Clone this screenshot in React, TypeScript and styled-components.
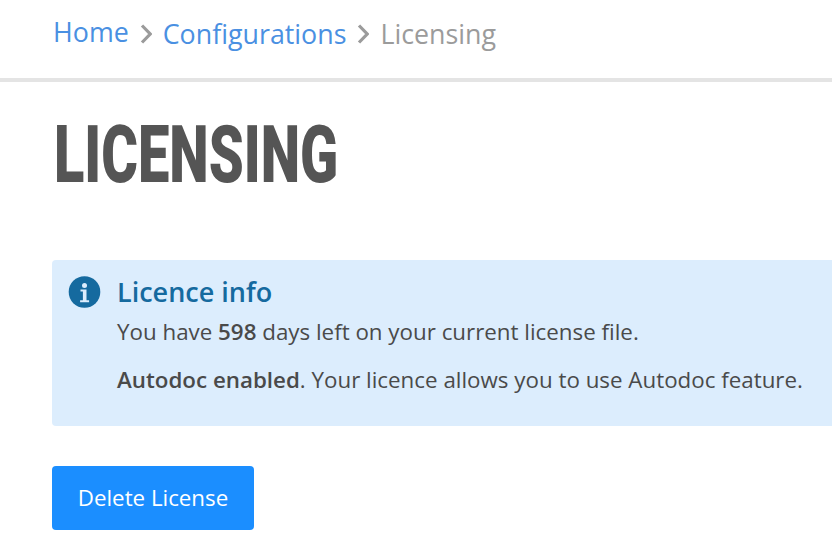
import React from 'react';
import styled, { createGlobalStyle } from 'styled-components';

const GlobalStyle = createGlobalStyle`
  html, body {
    margin: 0;
    padding: 0;
    background: #fff;
    overflow: hidden;
  }
  body {
    font-family: "Open Sans", "Liberation Sans", sans-serif;
    color: #4a4a4a;
  }
`;

const Page = styled.div`
  width: 832px;
  height: 542px;
  overflow: hidden;
`;

const Breadcrumbs = styled.nav`
  box-sizing: border-box;
  padding: 14px 0 0 53px;
  display: flex;
  align-items: flex-start;
  border-bottom: 4px solid #e4e4e4;
  height: 82px;
  font-size: 26.8px;
  line-height: 36px;
`;

const Crumb = styled.a<{ $raised?: boolean }>`
  color: #4a90e2;
  text-decoration: none;
  margin-top: ${({ $raised }) => ($raised ? '0' : '2px')};
`;

const Current = styled.span`
  color: #9b9b9b;
  margin-top: 2px;
`;

const Chevron = styled.svg`
  width: 13px;
  height: 20px;
  margin: 10px 11px 0 10px;
  fill: none;
  stroke: #9b9b9b;
  stroke-width: 3.2;
`;

const Content = styled.main`
  padding: 0 0 0 52px;
`;

const Title = styled.h1`
  margin: 31px 0 0 2px;
  height: 90px;
  font-family: Roboto, "Liberation Sans", Arial, sans-serif;
  font-size: 80px;
  line-height: 84px;
  font-weight: 900;
  color: #555;
  transform: scaleX(0.7);
  transform-origin: left top;
  white-space: nowrap;
`;

const Notice = styled.section`
  width: 800px;
  height: 166px;
  margin-top: 57px;
  box-sizing: border-box;
  padding: 13px 0 0 16px;
  display: flex;
  gap: 16px;
  background: #dcedfd;
  border-radius: 4px;
`;

const InfoIcon = styled.svg`
  width: 33px;
  height: 33px;
  margin-top: 3px;
  flex: none;
`;

const NoticeBody = styled.div`
  font-size: 22.35px;
  line-height: 30px;
`;

const NoticeTitle = styled.h2`
  margin: 1px 0 7px;
  font-size: 27px;
  line-height: 36px;
  font-weight: 600;
  color: #156a9f;
`;

const NoticeText = styled.p`
  margin: 0 0 18px;
  white-space: nowrap;

  strong {
    font-weight: 600;
  }
`;

const DeleteButton = styled.button`
  display: block;
  width: 202px;
  height: 64px;
  margin-top: 40px;
  padding: 0 0 2px;
  border: 0;
  border-radius: 4px;
  background: #1b8eff;
  color: #fff;
  font-family: inherit;
  font-size: 22.3px;
`;

const Arrow = () => (
  <Chevron viewBox="0 0 13 20">
    <path d="M3 1.5l8.2 8.5-8.2 8.5" />
  </Chevron>
);

const App: React.FC = () => (
  <Page>
    <GlobalStyle />
    <Breadcrumbs>
      <Crumb href="#" $raised>Home</Crumb>
      <Arrow />
      <Crumb href="#">Configurations</Crumb>
      <Arrow />
      <Current>Licensing</Current>
    </Breadcrumbs>
    <Content>
      <Title>LICENSING</Title>
      <Notice>
        <InfoIcon viewBox="0 0 33 33">
          <circle cx="16.5" cy="16" r="15.8" fill="#156a9f" />
          <circle cx="16.5" cy="9.5" r="2.5" fill="#dcedfd" />
          <path d="M12.5 13.5h6v10.8h2.6v1.9h-9v-1.9h2.8v-8.9h-2.4z" fill="#dcedfd" />
        </InfoIcon>
        <NoticeBody>
          <NoticeTitle>Licence info</NoticeTitle>
          <NoticeText>You have <strong>598</strong> days left on your current license file.</NoticeText>
          <NoticeText><strong>Autodoc enabled</strong>. Your licence allows you to use Autodoc feature.</NoticeText>
        </NoticeBody>
      </Notice>
      <DeleteButton>Delete License</DeleteButton>
    </Content>
  </Page>
);

export default App;
